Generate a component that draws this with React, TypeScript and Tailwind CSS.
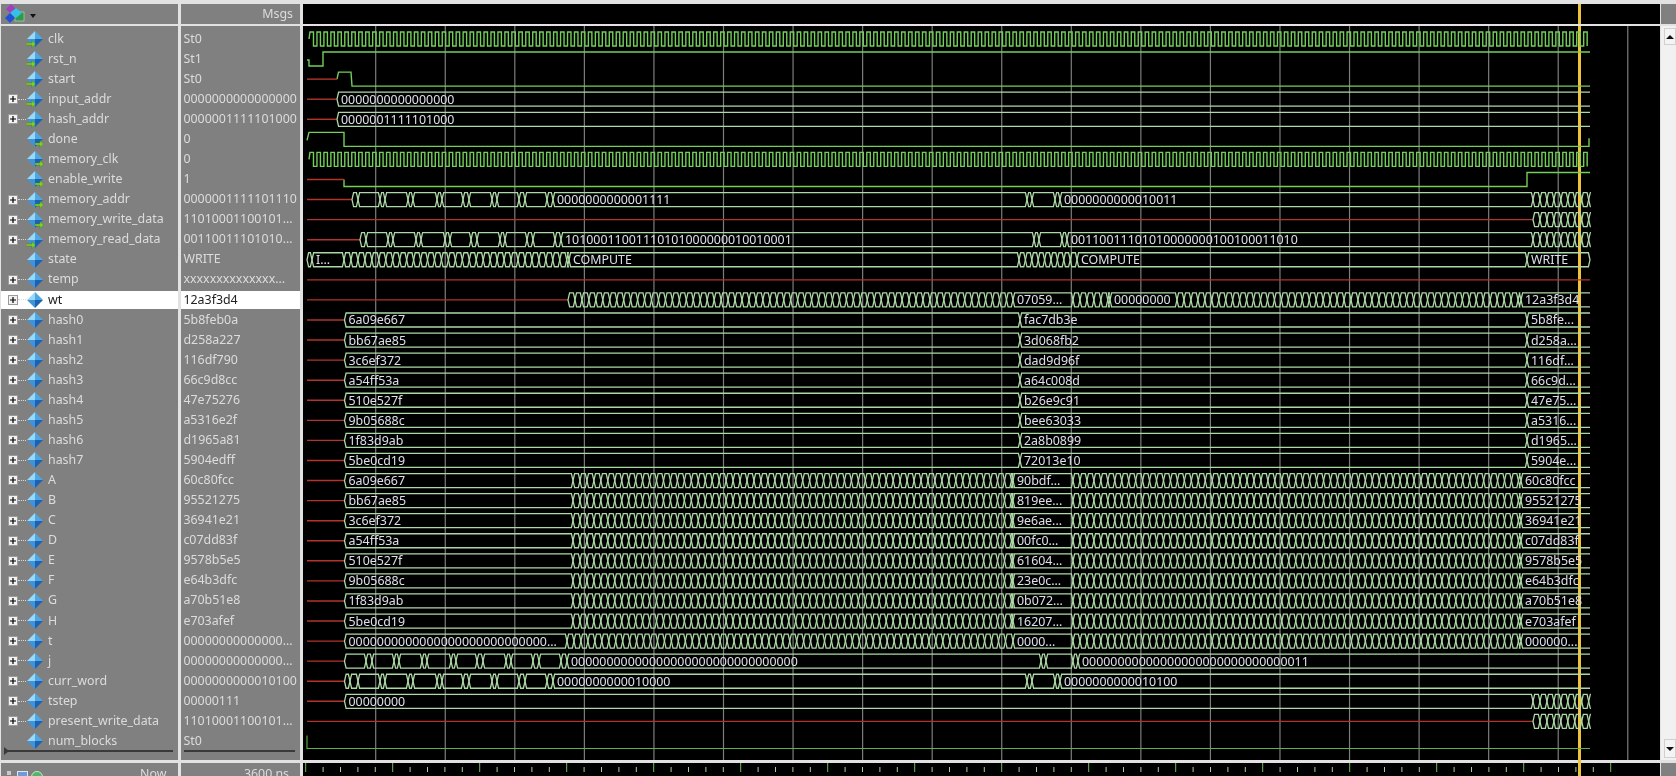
const END = 1590

type Seg = { a: number; b: number; t?: string }
type BusRow = { row: number; red: number; segs: Seg[] }

const rowY = (i: number) => 39 + 20.07 * i

// make segments from a list of cut positions, texts keyed by the index of the segment
const cuts = (xs: number[], texts: Record<number, string> = {}): Seg[] =>
  xs.slice(0, -1).map((a, i) => ({ a, b: xs[i + 1], t: texts[i] }))

const chain = (from: number, to: number, step = 6.96) => {
  const out: number[] = []
  for (let x = from; x < to - 1; x += step) out.push(x)
  return out
}

const addrA = [352, 358, 380, 385, 408, 413, 437, 442, 463, 469, 492, 497, 519, 525, 547, 553]
const addrB = [1027, 1032, 1055, 1060]
const tail = chain(1533, END)

const names = [
  ["clk", "St0", "in", 0],
  ["rst_n", "St1", "in", 0],
  ["start", "St0", "in", 0],
  ["input_addr", "0000000000000000", "in", 1],
  ["hash_addr", "0000001111101000", "in", 1],
  ["done", "0", "out", 0],
  ["memory_clk", "0", "out", 0],
  ["enable_write", "1", "out", 0],
  ["memory_addr", "0000001111101110", "out", 1],
  ["memory_write_data", "11010001100101...", "out", 1],
  ["memory_read_data", "00110011101010...", "in", 1],
  ["state", "WRITE", "none", 0],
  ["temp", "xxxxxxxxxxxxxx...", "none", 1],
  ["wt", "12a3f3d4", "none", 1],
  ["hash0", "5b8feb0a", "none", 1],
  ["hash1", "d258a227", "none", 1],
  ["hash2", "116df790", "none", 1],
  ["hash3", "66c9d8cc", "none", 1],
  ["hash4", "47e75276", "none", 1],
  ["hash5", "a5316e2f", "none", 1],
  ["hash6", "d1965a81", "none", 1],
  ["hash7", "5904edff", "none", 1],
  ["A", "60c80fcc", "none", 1],
  ["B", "95521275", "none", 1],
  ["C", "36941e21", "none", 1],
  ["D", "c07dd83f", "none", 1],
  ["E", "9578b5e5", "none", 1],
  ["F", "e64b3dfc", "none", 1],
  ["G", "a70b51e8", "none", 1],
  ["H", "e703afef", "none", 1],
  ["t", "00000000000000...", "none", 1],
  ["j", "00000000000000...", "none", 1],
  ["curr_word", "0000000000010100", "none", 1],
  ["tstep", "00000111", "none", 1],
  ["present_write_data", "11010001100101...", "none", 1],
  ["num_blocks", "St0", "none", 0],
] as const

const hashes = [
  ["6a09e667", "fac7db3e", "5b8fe..."],
  ["bb67ae85", "3d068fb2", "d258a..."],
  ["3c6ef372", "dad9d96f", "116df..."],
  ["a54ff53a", "a64c008d", "66c9d..."],
  ["510e527f", "b26e9c91", "47e75..."],
  ["9b05688c", "bee63033", "a5316..."],
  ["1f83d9ab", "2a8b0899", "d1965..."],
  ["5be0cd19", "72013e10", "5904e..."],
]
const regs = [
  ["90bdf...", "60c80fcc"],
  ["819ee...", "95521275"],
  ["9e6ae...", "36941e21"],
  ["00fc0...", "c07dd83f"],
  ["61604...", "9578b5e5"],
  ["23e0c...", "e64b3dfc"],
  ["0b072...", "a70b51e8"],
  ["16207...", "e703afef"],
]

const buses: BusRow[] = [
  { row: 3, red: 337, segs: [{ a: 337, b: END, t: "0000000000000000" }] },
  { row: 4, red: 337, segs: [{ a: 337, b: END, t: "0000001111101000" }] },
  {
    row: 8,
    red: 352,
    segs: cuts([...addrA, ...addrB, ...tail, END], { 15: "0000000000001111", 19: "0000000000010011" }),
  },
  { row: 9, red: 1533, segs: cuts([...tail, END]) },
  {
    row: 10,
    red: 360,
    segs: cuts(
      [
        360, 366, 388, 393, 416, 421, 445, 450, 471, 477, 500, 505, 527, 533, 555, 561, 1034, 1039, 1062, 1067,
        ...tail,
        END,
      ],
      { 15: "10100011001110101000000010010001", 19: "00110011101010000000100100011010" },
    ),
  },
  {
    row: 11,
    red: 307,
    segs: [
      { a: 307, b: 312 },
      { a: 312, b: 344, t: "I..." },
      ...cuts([...chain(344, 569), 569]),
      { a: 569, b: 1019, t: "COMPUTE" },
      ...cuts([...chain(1019, 1077, 6.4), 1077]),
      { a: 1077, b: 1527, t: "COMPUTE" },
      { a: 1527, b: END, t: "WRITE" },
    ],
  },
  {
    row: 13,
    red: 568,
    segs: [
      ...cuts([...chain(568, 1013), 1013]),
      { a: 1013, b: 1073, t: "07059..." },
      ...cuts([...chain(1073, 1110), 1110]),
      { a: 1110, b: 1177, t: "00000000" },
      ...cuts([...chain(1177, 1521), 1521]),
      { a: 1521, b: END, t: "12a3f3d4" },
    ],
  },
  ...hashes.map((h, i) => ({
    row: 14 + i,
    red: 344.5,
    segs: [
      { a: 344.5, b: 1020, t: h[0] },
      { a: 1020, b: 1527, t: h[1] },
      { a: 1527, b: END, t: h[2] },
    ],
  })),
  ...regs.map((r, i) => ({
    row: 22 + i,
    red: 344.5,
    segs: [
      { a: 344.5, b: 573, t: hashes[i][0] },
      ...cuts([...chain(573, 1013), 1013]),
      { a: 1013, b: 1073, t: r[0] },
      ...cuts([...chain(1073, 1521), 1521]),
      { a: 1521, b: END, t: r[1] },
    ],
  })),
  {
    row: 30,
    red: 344.5,
    segs: [
      { a: 344.5, b: 567, t: "0000000000000000000000000000..." },
      ...cuts([...chain(567, 1013), 1013]),
      { a: 1013, b: 1073, t: "0000..." },
      ...cuts([...chain(1073, 1521), 1521]),
      { a: 1521, b: END, t: "000000..." },
    ],
  },
  {
    row: 31,
    red: 344.5,
    segs: cuts([344.5, 366, 372, 394, 399, 422, 427, 451, 456, 477, 483, 506, 511, 533, 539, 561, 567, 1041, 1046, 1073, 1078, END], {
      16: "00000000000000000000000000000000",
      20: "00000000000000000000000000000011",
    }),
  },
  {
    row: 32,
    red: 344.5,
    segs: cuts([344.5, 350, ...addrA.slice(1), ...addrB, END], { 16: "0000000000010000", 20: "0000000000010100" }),
  },
  { row: 33, red: 344.5, segs: [{ a: 344.5, b: 1533, t: "00000000" }, ...cuts([...tail, END])] },
  { row: 34, red: 1533, segs: cuts([...tail, END]) },
]

const clockPath = (cy: number) => {
  let d = `M309 ${cy} L310 ${cy - 7}`
  for (let x = 310, hi = true; x + 3.48 < END; x += 3.48, hi = !hi) {
    const y = hi ? cy - 7 : cy + 7
    const ny = hi ? cy + 7 : cy - 7
    d += ` L${x + 3.48} ${y} L${x + 3.48} ${ny}`
  }
  return d
}

const segPath = (s: Seg, cy: number) => {
  const h = 7
  const isEnd = s.b >= END && s.t !== "WRITE"
  const l = `M${s.a} ${cy} L${s.a + 1.6} ${cy - h}`
  if (isEnd) return `${l} L${s.b} ${cy - h} M${s.a} ${cy} L${s.a + 1.6} ${cy + h} L${s.b} ${cy + h}`
  return `${l} L${s.b - 1.6} ${cy - h} L${s.b} ${cy} L${s.b - 1.6} ${cy + h} L${s.a + 1.6} ${cy + h} Z`
}

const Waves = () => {
  const grid = Array.from({ length: 19 }, (_, k) => 375.7 + 69.56 * k)
  const y = rowY
  return (
    <svg viewBox="303 26 1357 734" className="relative z-10 block w-[1357px] h-[734px] text-[12.4px]">
      {grid.map((x) => (
        <line key={x} x1={x} x2={x} y1={26} y2={760} stroke="#7d7d7d" strokeWidth={1.2} />
      ))}
      <g fill="none" strokeWidth={1.4} stroke="#72cf58">
        <path d={clockPath(y(0))} />
        <path d={clockPath(y(6))} />
        <path d={`M307 ${y(1) + 1} L309 ${y(1) + 1} L309 ${y(1) + 7} L323 ${y(1) + 7} L323 ${y(1) - 7} L${END} ${y(1) - 7}`} />
        <path d={`M337 ${y(2)} L338.5 ${y(2) - 7} L351 ${y(2) - 7} L352 ${y(2) + 7} L${END} ${y(2) + 7}`} />
        <path d={`M307 ${y(5) + 1} L309 ${y(5) - 7} L344 ${y(5) - 7} L344 ${y(5) + 7} L1589 ${y(5) + 7} L1589 ${y(5) - 1}`} />
        <path d={`M344 ${y(7)} L344 ${y(7) + 7} L1527 ${y(7) + 7} L1527 ${y(7) - 7} L${END} ${y(7) - 7}`} />
        <path d={`M307 ${y(35) - 6} L307 ${y(35) + 7} L${END} ${y(35) + 7}`} strokeWidth={1.1} stroke="#5fb04a" />
      </g>
      <g fill="none" strokeWidth={1.4} stroke="#b2342c">
        <path d={`M307 ${y(2)} L337 ${y(2)}`} />
        <path d={`M307 ${y(7)} L344 ${y(7)}`} />
        <path d={`M307 ${y(12)} L${END} ${y(12)}`} />
        {buses
          .filter((b) => b.red > 307)
          .map((b) => (
            <path key={b.row} d={`M307 ${y(b.row)} L${b.red} ${y(b.row)}`} />
          ))}
      </g>
      <g fill="none" strokeWidth={1.3} stroke="#add9a6">
        {buses.map((b) => b.segs.map((s, i) => <path key={`${b.row}-${i}`} d={segPath(s, y(b.row))} />))}
      </g>
      <g fill="#dde0ea">
        {buses.map((b) =>
          b.segs
            .filter((s) => s.t)
            .map((s) => (
              <text key={`${b.row}-${s.a}`} x={s.a + 4} y={y(b.row) + 4.5}>
                {s.t}
              </text>
            )),
        )}
      </g>
    </svg>
  )
}

const Diamond = ({ kind }: { kind: string }) => (
  <svg viewBox="0 0 18 18" className="w-[18px] h-[18px] shrink-0">
    <polygon points="9,1 1,9 9,9" fill="#9ad8f8" />
    <polygon points="9,1 17,9 9,9" fill="#4ea6e2" />
    <polygon points="1,9 9,17 9,9" fill="#3f93d8" />
    <polygon points="17,9 9,17 9,9" fill="#1c62b4" />
    {kind === "in" && <path d="M0 13h6v-2.5l3.5 3.5-3.5 3.5V15H0z" fill="#7ed321" stroke="#3d7a12" strokeWidth={0.4} />}
    {kind === "out" && <path d="M9 13h5v-2.5l3.5 3.5-3.5 3.5V15H9z" fill="#7ed321" stroke="#3d7a12" strokeWidth={0.4} />}
  </svg>
)

const Plus = () => (
  <div className="w-[10px] h-[10px] bg-[#f2f2f2] border border-[#9a9a9a] flex items-center justify-center text-black">
    <svg viewBox="0 0 8 8" className="w-2 h-2">
      <path d="M1 4h6M4 1v6" stroke="#000" strokeWidth={1.2} />
    </svg>
  </div>
)

const Ticks = () => {
  const ticks = Array.from({ length: 76 }, (_, k) => 305.7 + 17.4 * k)
  return (
    <svg viewBox="303 763 1357 13" className="relative z-10 block w-[1357px] h-[13px]">
      {ticks.map((x, k) => (
        <line
          key={x}
          x1={x}
          x2={x}
          y1={k % 5 === 0 ? 763 : 767}
          y2={772}
          stroke={k % 5 === 0 ? "#6fbf58" : "#a9cf9c"}
          strokeWidth={1}
        />
      ))}
    </svg>
  )
}

const App = () => {
  return (
    <div className="w-[1676px] h-[776px] overflow-hidden bg-[#e2e2e2] pt-1 flex font-['Noto_Sans',sans-serif] text-[12.4px] text-[#dcdcdc] blur-[0.4px]">
      {/* names */}
      <div className="w-[178px] ml-px flex flex-col">
        <div className="h-5 bg-[#808080] flex items-center pl-[2px] gap-[5px]">
          <svg viewBox="0 0 22 20" className="w-[22px] h-5">
            <rect x="12" y="8" width="9" height="9" fill="#2f9a4a" stroke="#b7e0b7" strokeWidth={0.6} />
            <polygon points="8,0 13,5 8,10 3,5" fill="#a040c0" />
            <polygon points="13,4 19,9 13,14 7,9" fill="#36c0e8" />
            <polygon points="7,9 12,14 7,19 2,14" fill="#2050d8" />
          </svg>
          <svg viewBox="0 0 6 4" className="w-[6px] h-1 mt-1">
            <path d="M0 0h6L3 4z" fill="#111" />
          </svg>
        </div>
        <div className="mt-[2px] h-[734px] bg-[#808080] pt-[3px] relative">
          {names.map(([name, , kind, exp], i) => (
            <div key={name} className="h-[20.07px] py-px">
              <div className={`h-full flex items-center pl-[7px] ${i === 13 ? "bg-white text-[#222]" : ""}`}>
                <div className="w-[10px] shrink-0">{exp ? <Plus /> : null}</div>
                <div className={`w-2 shrink-0 border-t border-dotted ${exp ? "border-[#d8d8d8]" : "border-transparent"}`} />
                <Diamond kind={kind} />
                <span className="ml-1 whitespace-nowrap">{name}</span>
              </div>
            </div>
          ))}
          <div className="absolute left-[3px] right-[5px] bottom-2 h-[2px] bg-[#3a3a3a]" />
          <svg viewBox="0 0 5 8" className="absolute left-[3px] bottom-[5px] w-[5px] h-2">
            <path d="M0 0l5 4-5 4z" fill="#3a3a3a" />
          </svg>
        </div>
        <div className="mt-[3px] h-[13px] bg-[#808080] flex items-start pl-[6px] relative overflow-hidden">
          <div className="w-1 h-1 bg-[#c9c9c9] mt-[8px] mr-[6px]" />
          <div className="w-[11px] h-3 bg-[#6f9ad8] border border-[#dce6f5] mt-[8px] mr-[3px]" />
          <div className="w-3 h-3 rounded-full bg-[#56b36a] border border-[#c5e8c8] mt-[8px]" />
          <span className="absolute right-3 top-[3px] leading-[16px]">Now</span>
        </div>
      </div>

      {/* values */}
      <div className="w-[119px] ml-[3px] flex flex-col">
        <div className="h-5 bg-[#808080] text-right pr-[7px] leading-5">Msgs</div>
        <div className="mt-[2px] h-[734px] bg-[#808080] pt-[3px] relative">
          {names.map(([name, value], i) => (
            <div key={name} className="h-[20.07px] py-px">
              <div className={`h-full flex items-center pl-[2px] whitespace-nowrap ${i === 13 ? "bg-white text-[#222]" : ""}`}>{value}</div>
            </div>
          ))}
          <div className="absolute left-[3px] right-[5px] bottom-2 h-[2px] bg-[#3a3a3a]" />
        </div>
        <div className="mt-[3px] h-[13px] bg-[#808080] text-right pr-[11px] pt-[3px] leading-[16px] overflow-hidden">3600 ns</div>
      </div>

      {/* wave area */}
      <div className="w-[1357px] ml-[3px] flex flex-col relative">
        <div className="h-5 bg-black" />
        <div className="mt-[2px] h-[734px] bg-black">
          <Waves />
        </div>
        <div className="mt-[3px] h-[13px] bg-black">
          <Ticks />
        </div>
        <div className="absolute left-[1274.5px] top-0 bottom-0 w-[3.5px] bg-[#eec33c]" />
        <div className="absolute left-[1274.5px] top-[20px] h-[2px] w-[3.5px] bg-[#e2e2e2]" />
      </div>

      {/* scrollbar */}
      <div className="w-[15px] ml-px flex flex-col">
        <div className="h-5 bg-[#808080]" />
        <div className="mt-[2px] h-[734px] bg-[#f1f1f1] flex flex-col pl-[3px] pb-[2px]">
          <div className="h-[17px] mt-[2px] bg-[#f4f4f4] border border-[#d0d0d0] flex items-center justify-center">
            <svg viewBox="0 0 8 4" className="w-2 h-1">
              <path d="M0 4h8L4 0z" fill="#111" />
            </svg>
          </div>
          <div className="flex-1" />
          <div className="h-[19px] bg-[#f4f4f4] border border-[#d0d0d0] flex items-center justify-center">
            <svg viewBox="0 0 8 4" className="w-2 h-1">
              <path d="M0 0h8L4 4z" fill="#111" />
            </svg>
          </div>
        </div>
        <div className="mt-[3px] h-[13px] bg-[#808080]" />
      </div>
    </div>
  )
}

export default App
